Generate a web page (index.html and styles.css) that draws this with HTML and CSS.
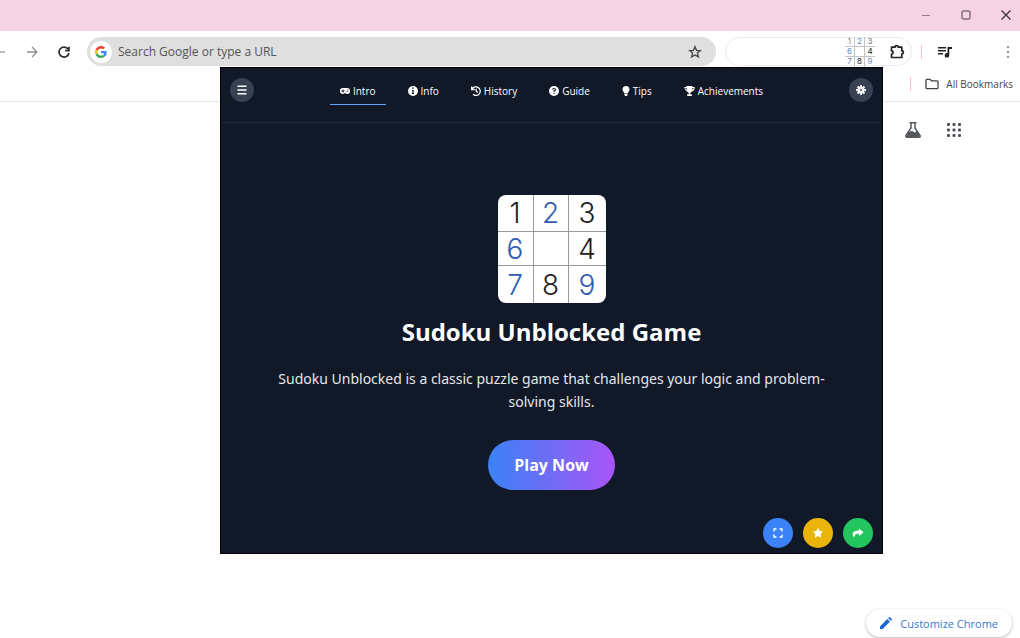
FILE: index.html
```html
<!DOCTYPE html>
<html lang="en">
<head>
  <meta charset="UTF-8" />
  <meta name="viewport" content="width=device-width, initial-scale=1.0" />
  <title>Sudoku Unblocked Game</title>
  <link rel="stylesheet" href="styles.css">
</head>
<body>
  <!-- Window title bar -->
  <header class="titlebar">
    <button type="button" aria-label="Minimize">
      <svg width="12" height="12" viewBox="0 0 12 12"><path d="M2 5.500h8" stroke="#8d7883" /></svg>
    </button>
    <button type="button" aria-label="Maximize">
      <svg width="12" height="12" viewBox="0 0 12 12"><rect x="2" y="1" width="8" height="8" rx="1" fill="none" stroke="#4a3f45" /></svg>
    </button>
    <button type="button" aria-label="Close">
      <svg width="12" height="12" viewBox="0 0 12 12"><path d="M1.500 .5l9 9M10.500 .5l-9 9" stroke="#3a3036" stroke-width="1.300" /></svg>
    </button>
  </header>

  <!-- Toolbar -->
  <div class="toolbar">
    <div class="nav-buttons">
      <button type="button" aria-label="Back">
        <svg width="12" height="12" viewBox="0 0 12 12" fill="none" stroke="#a8a8a8" stroke-width="1.300"><path d="M11 6H1M6 1L1 6l5 5" /></svg>
      </button>
      <button type="button" aria-label="Forward">
        <svg width="12" height="12" viewBox="0 0 12 12" fill="none" stroke="#8f8f8f" stroke-width="1.300"><path d="M1 6h10M6 1l5 5-5 5" /></svg>
      </button>
      <button type="button" aria-label="Reload">
        <svg width="12" height="12" viewBox="0 0 12 12" fill="none" stroke="#2b2b2b" stroke-width="1.700"><path d="M10.200 3.200A5 5 0 1 0 11 7" /><path d="M11 .8v3.800H7.200" /></svg>
      </button>
    </div>

    <form class="omnibox">
      <span class="google">
        <svg width="12" height="12" viewBox="0 0 48 48">
          <path fill="#EA4335" d="M24 9.500c3.540 0 6.710 1.220 9.210 3.600l6.850-6.850C35.900 2.380 30.470 0 24 0 14.620 0 6.510 5.380 2.560 13.220l7.980 6.190C12.430 13.720 17.740 9.500 24 9.500z" />
          <path fill="#4285F4" d="M46.980 24.550c0-1.570-.15-3.090-.38-4.550H24v9.020h12.940c-.58 2.960-2.260 5.480-4.780 7.180l7.730 6c4.510-4.180 7.090-10.360 7.090-17.650z" />
          <path fill="#FBBC05" d="M10.530 28.590c-.48-1.450-.76-2.990-.76-4.590s.27-3.140.76-4.590l-7.980-6.190C.92 16.460 0 20.120 0 24c0 3.880.92 7.540 2.560 10.780l7.970-6.190z" />
          <path fill="#34A853" d="M24 48c6.480 0 11.930-2.130 15.890-5.810l-7.730-6c-2.150 1.450-4.920 2.300-8.160 2.300-6.260 0-11.570-4.220-13.470-9.910l-7.980 6.190C6.510 42.620 14.620 48 24 48z" />
        </svg>
      </span>
      <input type="text" class="omnibox-input" aria-label="Search" placeholder="Search Google or type a URL" />
      <button type="button" aria-label="Bookmark this tab">
        <svg width="14" height="14" viewBox="0 0 14 14" fill="none" stroke="#444" stroke-width="1.300"><path d="M7 1.700l1.500 3.600 3.900.3-3 2.500 1 3.800L7 9.900l-3.400 2 1-3.800-3-2.500 3.900-.3z" /></svg>
      </button>
    </form>

    <div class="extensions">
      <button type="button" class="ext-icon" aria-label="Sudoku Unblocked">
        <span>1</span><span class="blue">2</span><span>3</span>
        <span class="blue">6</span><span></span><span class="dark">4</span>
        <span class="blue">7</span><span class="dark">8</span><span class="blue">9</span>
      </button>
      <button type="button" aria-label="Extensions">
        <svg width="16" height="16" viewBox="0 0 16 16" fill="none" stroke="#222" stroke-width="1.700" stroke-linejoin="round"><path d="M2.500 3.200H6a1.600 1.600 0 0 1 3.200 0h3.600v3.600a1.600 1.600 0 0 1 0 3.200v3.500H2.500V10a1.600 1.600 0 0 0 0-3.200z" /></svg>
      </button>
    </div>

    <span class="divider"></span>

    <button type="button" class="media" aria-label="Media controls">
      <svg width="14" height="12" viewBox="0 0 14 12" fill="#222"><path d="M0 1h8v1.600H0zM0 4h8v1.600H0zM0 7h5v1.600H0zM9.500 1H14v2h-2.700v6.200a2.300 2.300 0 1 1-1.800-2.200z" /></svg>
    </button>
    <button type="button" class="more" aria-label="Menu">
      <svg width="4" height="14" viewBox="0 0 4 14" fill="#999"><circle cx="2" cy="2" r="1.200" /><circle cx="2" cy="7" r="1.200" /><circle cx="2" cy="12" r="1.200" /></svg>
    </button>
  </div>

  <!-- Bookmarks bar -->
  <div class="bookmarks">
    <span class="divider"></span>
    <a href="#" class="all-bookmarks">
      <svg width="14" height="12" viewBox="0 0 14 12" fill="none" stroke="#444" stroke-width="1.300"><path d="M1 9.700V2.300Q1 1.300 2 1.300h3l1.500 1.500H12q1 0 1 1v5.900q0 1-1 1H2q-1 0-1-1z" /></svg>
      All Bookmarks
    </a>
  </div>

  <!-- New tab page -->
  <main class="new-tab">
    <div class="page-tools">
      <button type="button" aria-label="Labs">
        <svg width="18" height="18" viewBox="0 0 18 18"><path d="M5.500 1.700h7M7 2v5L2 14.300Q1.200 16.200 3 16.300h12q1.800-.1 1-2L11 7V2" fill="none" stroke="#55585c" stroke-width="1.500" /><path d="M5 10.500l3.500-.5 2 1.500 2.300-1.500 3 5-.8 1.300H3l-.8-1.300z" fill="#55585c" /></svg>
      </button>
      <button type="button" aria-label="Google apps">
        <svg width="16" height="16" viewBox="0 0 16 16" fill="#4d5156"><rect x="1" y="1" width="3" height="3" rx="1" /><rect x="6.500" y="1" width="3" height="3" rx="1" /><rect x="12" y="1" width="3" height="3" rx="1" /><rect x="1" y="6.500" width="3" height="3" rx="1" /><rect x="6.500" y="6.500" width="3" height="3" rx="1" /><rect x="12" y="6.500" width="3" height="3" rx="1" /><rect x="1" y="12" width="3" height="3" rx="1" /><rect x="6.500" y="12" width="3" height="3" rx="1" /><rect x="12" y="12" width="3" height="3" rx="1" /></svg>
      </button>
    </div>

    <button type="button" class="customize">
      <svg width="12" height="12" viewBox="0 0 12 12" fill="#1a66d6"><path d="M0 12V9.400L7.300 2.100l2.600 2.600L2.600 12zM8.200 1.200L9.100.3q.5-.5 1 0l1.600 1.600q.5.5 0 1l-.9.9z" /></svg>
      Customize Chrome
    </button>
  </main>

  <!-- Extension popup -->
  <section class="popup">
    <div class="popup-header">
      <button type="button" class="round-btn" aria-label="Menu">
        <svg width="10" height="10" viewBox="0 0 10 10" fill="#fff"><path d="M.5.500h9V2h-9zM.5 4.200h9v1.500h-9zM.5 8h9v1.500h-9z" /></svg>
      </button>
      <nav class="tabs">
        <a href="#" class="tab active">
          <svg width="10" height="10" viewBox="0 0 20 20" fill="#fff"><path fill-rule="evenodd" d="M5.500 4h9A5.500 5.500 0 0 1 20 9.500v1A5.500 5.500 0 0 1 14.500 16q-2 0-3.500-1.500H9Q7.500 16 5.500 16A5.500 5.500 0 0 1 0 10.500v-1A5.500 5.500 0 0 1 5.500 4zM5 7v2H3v2h2v2h2v-2h2V9H7V7zm8 3v2h2v-2zm2-3v2h2V7z" /></svg>
          Intro
        </a>
        <a href="#" class="tab">
          <svg width="10" height="10" viewBox="0 0 10 10"><circle cx="5" cy="5" r="5" fill="#fff" /><path d="M4.200 2.200h1.600M4 4.600h1v2.900M3.800 7.500h2.400" stroke="#111827" stroke-width="1.200" fill="none" /></svg>
          Info
        </a>
        <a href="#" class="tab">
          <svg width="10" height="10" viewBox="0 0 10 10" fill="none" stroke="#fff" stroke-width="1.300"><path d="M1.200 3A4.300 4.300 0 1 1 2 8.300M.7.500v3h3M5.200 2.800v2.400L6.800 6.500" /></svg>
          History
        </a>
        <a href="#" class="tab">
          <svg width="10" height="10" viewBox="0 0 10 10"><circle cx="5" cy="5" r="5" fill="#fff" /><path d="M3.500 3.700Q3.700 2.500 5 2.500T6.500 3.800Q6.500 4.600 5 5.200v.9M5 7v1.100" stroke="#111827" stroke-width="1.200" fill="none" /></svg>
          Guide
        </a>
        <a href="#" class="tab">
          <svg width="8" height="10" viewBox="0 0 8 10" fill="#fff"><path d="M4 0a3.500 3.500 0 0 1 3.500 3.500C7.500 5 6 5.800 5.800 7.200H2.200C2 5.800.5 5 .5 3.500A3.500 3.500 0 0 1 4 0zM2.400 7.800h3.200v1L5 10H3l-.6-1.200z" /></svg>
          Tips
        </a>
        <a href="#" class="tab">
          <svg width="11" height="10" viewBox="0 0 11 10" fill="#fff"><path d="M2.500 0h6v1h2.300c0 2.800-1 4-3 4.400Q7 6.500 6.200 6.800v1.500h1.600V10H3.200V8.300h1.600V6.800Q4 6.500 3.200 5.400 1.200 5 .2 1h2.300zM1.300 2q.3 1.500 1.500 2.100L2.500 2zM8.500 2l-.3 2.100Q9.400 3.500 9.700 2z" fill-rule="evenodd" /></svg>
          Achievements
        </a>
      </nav>
      <button type="button" class="round-btn" aria-label="Settings">
        <svg width="10" height="10" viewBox="0 0 20 20"><g stroke="#f3f4f6" stroke-width="4"><path d="M10 0v20M0 10h20M3 3l14 14M17 3L3 17" /></g><circle cx="10" cy="10" r="7" fill="#f3f4f6" /><circle cx="10" cy="10" r="2.500" fill="#7b838f" /></svg>
      </button>
    </div>

    <div class="intro">
      <div class="logo">
        <span>1</span><span class="blue">2</span><span>3</span>
        <span class="blue">6</span><span></span><span>4</span>
        <span class="blue">7</span><span>8</span><span class="blue">9</span>
      </div>
      <h1>Sudoku Unblocked Game</h1>
      <p>Sudoku Unblocked is a classic puzzle game that challenges your logic and problem-solving skills.</p>
      <button type="button" class="play">Play Now</button>
    </div>

    <div class="actions">
      <button type="button" class="fullscreen" aria-label="Fullscreen">
        <svg width="10" height="10" viewBox="0 0 10 10" fill="none" stroke="#fff" stroke-width="1.300"><path d="M3.500 1H1v2.500M6.500 1H9v2.500M1 6.500V9h2.500M9 6.500V9H6.500" /></svg>
      </button>
      <button type="button" class="rate" aria-label="Rate">
        <svg width="12" height="12" viewBox="0 0 12 12" fill="#fff"><path d="M6 .8l1.600 3.300 3.600.5-2.600 2.500.6 3.600L6 9l-3.200 1.700.6-3.600L.8 4.600l3.600-.5z" /></svg>
      </button>
      <button type="button" class="share" aria-label="Share">
        <svg width="12" height="12" viewBox="0 0 12 12" fill="#fff"><path d="M7 1.500L11.500 5.200 7 9V6.800Q3 6.500 2.300 10 .3 8.800.7 6.500 1.300 3.600 7 3.600z" /></svg>
      </button>
    </div>
  </section>
</body>
</html>
```

FILE: styles.css
```css
* {
  margin: 0;
  padding: 0;
  box-sizing: border-box;
}
body {
  display: flex;
  flex-direction: column;
  min-height: 100vh;
  position: relative;
  font-family: 'Open Sans', 'Noto Sans', sans-serif;
  background: #fff;
  color: #444;
}
button {
  display: flex;
  align-items: center;
  justify-content: center;
  border: none;
  background: none;
  font-family: inherit;
  cursor: pointer;
}
a {
  color: inherit;
  text-decoration: none;
}
svg {
  display: block;
  flex-shrink: 0;
}

/* Browser window */
.titlebar {
  display: flex;
  justify-content: flex-end;
  align-items: center;
  gap: 28px;
  height: 31px;
  padding: 0 8px;
  background: #f6d3e3;
}
.toolbar {
  display: flex;
  align-items: center;
  height: 41px;
  padding-right: 10px;
}
.nav-buttons {
  display: flex;
  gap: 20px;
  margin-left: -6px;
  margin-right: 17px;
}
.omnibox {
  display: flex;
  align-items: center;
  flex: 1;
  height: 29px;
  padding: 0 14px 0 3px;
  border-radius: 15px;
  background: #dfdfdf;
}
.google {
  display: flex;
  align-items: center;
  justify-content: center;
  width: 22px;
  height: 22px;
  border-radius: 50%;
  background: #fff;
}
.omnibox-input {
  flex: 1;
  min-width: 0;
  margin-left: 6px;
  border: none;
  outline: none;
  background: none;
  font-family: inherit;
  font-size: 12px;
}
.omnibox-input::placeholder {
  color: #555;
}
.extensions {
  display: flex;
  justify-content: flex-end;
  align-items: center;
  gap: 14px;
  width: 187px;
  height: 29px;
  margin: 0 9px;
  padding-right: 6px;
  border: 1px solid #ececec;
  border-radius: 15px;
}
.ext-icon {
  display: grid;
  grid-template-columns: repeat(3, 10px);
  grid-template-rows: repeat(3, 10px);
  font-family: Inter, sans-serif;
  font-size: 8px;
  line-height: 9px;
  color: #777;
}
.ext-icon span {
  height: 10px;
  border-right: 1px solid #c4c4c4;
  border-bottom: 1px solid #c4c4c4;
}
.ext-icon span:nth-child(3n) {
  border-right: none;
}
.ext-icon span:nth-child(n+7) {
  border-bottom: none;
}
.ext-icon .blue {
  color: #6b8bc6;
}
.ext-icon .dark {
  color: #222;
}
.divider {
  width: 1px;
  height: 14px;
  background: #f5c3d8;
}
.media {
  margin-left: 16px;
}
.more {
  margin-left: 54px;
}
.bookmarks {
  display: flex;
  justify-content: flex-end;
  align-items: center;
  gap: 14px;
  height: 30px;
  padding: 0 7px 6px 0;
  border-bottom: 1px solid #e6e6e6;
}
.all-bookmarks {
  display: flex;
  align-items: center;
  gap: 7px;
  font-size: 10px;
}
.new-tab {
  display: flex;
  flex: 1;
  flex-direction: column;
  align-items: flex-end;
}
.page-tools {
  display: flex;
  align-items: center;
  gap: 24px;
  margin: 19px 58px 0 0;
}
.customize {
  gap: 8px;
  height: 28px;
  margin: auto 8px 1px 0;
  padding: 0 14px;
  border-radius: 14px;
  background: #fff;
  box-shadow: 0 1px 3px rgba(0, 0, 0, 0.3);
  color: #3a78cf;
  font-size: 11px;
}

/* Extension popup */
.popup {
  display: flex;
  flex-direction: column;
  position: absolute;
  top: 67px;
  right: 137px;
  width: 65%;
  border: 1px solid #000;
  background: #111827;
  color: #fff;
}
.popup-header {
  display: flex;
  justify-content: space-between;
  align-items: flex-start;
  padding: 10px 9px 17px;
  border-bottom: 1px solid #1f2937;
}
.round-btn {
  width: 24px;
  height: 24px;
  border-radius: 50%;
  background: #374151;
}
.tabs {
  display: flex;
  gap: 12px;
}
.tab {
  display: flex;
  align-items: center;
  gap: 3px;
  height: 27px;
  padding: 0 10px 1px;
  border-bottom: 1px solid transparent;
  font-size: 10px;
}
.tab.active {
  border-color: #60a5fa;
}
.intro {
  display: flex;
  flex-direction: column;
  align-items: center;
  padding: 72px 40px 28px;
  text-align: center;
}
.logo {
  display: grid;
  grid-template-columns: 36px 35px 37px;
  grid-template-rows: 37px 34px 37px;
  border-radius: 8px;
  background: #fff;
  color: #1d1d1d;
  font-family: Inter, sans-serif;
  font-size: 28px;
  font-weight: 300;
  line-height: 34px;
}
.logo span {
  display: flex;
  align-items: center;
  justify-content: center;
  border-right: 1px solid #999;
  border-bottom: 1px solid #999;
}
.logo span:nth-child(3n) {
  border-right: none;
}
.logo span:nth-child(n+7) {
  border-bottom: none;
}
.logo .blue {
  color: #2f5bb0;
}
.intro h1 {
  margin-top: 12px;
  font-size: 24px;
  line-height: 34px;
}
.intro p {
  margin-top: 18px;
  color: #e5e7eb;
  font-family: 'Noto Sans', sans-serif;
  font-size: 14px;
  line-height: 23px;
}
.play {
  height: 50px;
  margin-top: 27px;
  padding: 0 26px;
  border-radius: 25px;
  background: linear-gradient(to right, #3b82f6, #a855f7);
  color: #fff;
  font-size: 16px;
  font-weight: bold;
}
.actions {
  display: flex;
  justify-content: flex-end;
  gap: 10px;
  padding: 0 9px 5px;
}
.actions button {
  width: 30px;
  height: 30px;
  border-radius: 50%;
}
.fullscreen {
  background: #3b82f6;
}
.rate {
  background: #eab308;
}
.share {
  background: #22c55e;
}
```
